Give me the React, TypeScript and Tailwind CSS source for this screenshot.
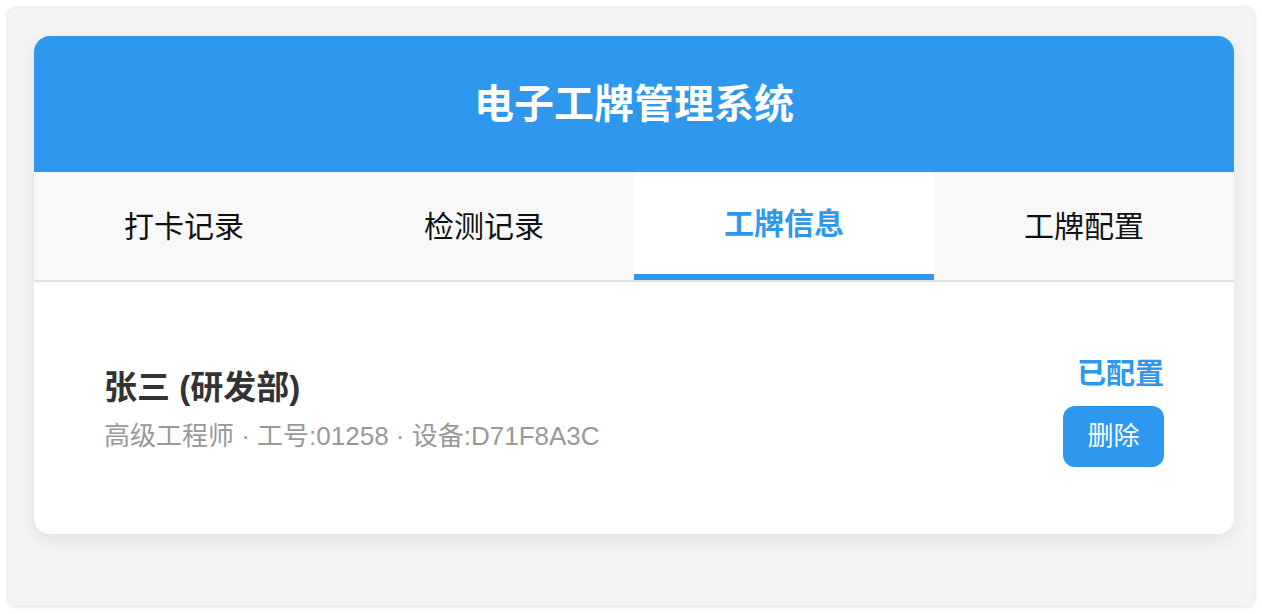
const tabs = ["打卡记录", "检测记录", "工牌信息", "工牌配置"];

export default function App() {
  const active = 2;
  return (
    <div className="min-h-screen bg-white p-2 font-['Liberation_Sans','Noto_Sans_CJK_SC',sans-serif]">
      <div className="h-[598px] w-[1246px] rounded-lg bg-[#f4f4f4] pl-[26px] pt-[28px] shadow-[0_0_4px_rgba(0,0,0,0.18)]">
        <div className="w-[1200px] overflow-hidden rounded-2xl bg-white shadow-[0_6px_18px_rgba(0,0,0,0.08)]">
          <div className="flex h-[136px] items-center justify-center bg-[#2d98ee]">
            <h1 className="text-[40px] font-bold leading-[48px] text-white">电子工牌管理系统</h1>
          </div>

          <div className="flex border-b-2 border-[#e2e2e2] bg-[#f8f8f8]">
            {tabs.map((t, i) => (
              <div
                key={t}
                className={
                  i === active
                    ? "flex h-[108px] flex-1 items-center justify-center border-b-[6px] border-[#2d98ee] bg-white text-[30px] font-bold text-[#2d98ee]"
                    : "flex h-[108px] flex-1 items-center justify-center text-[30px] text-[#111]"
                }
              >
                {t}
              </div>
            ))}
          </div>

          <div className="flex h-[252px] items-center justify-between px-[70px] pt-[6px]">
            <div>
              <div className="text-[33px] font-bold leading-[38px] text-[#333]">张三 (研发部)</div>
              <div className="mt-[11px] text-[26px] leading-[36px] text-[#999]">
                高级工程师 · 工号:01258 · 设备:D71F8A3C
              </div>
            </div>
            <div className="flex flex-col items-end">
              <div className="text-[29px] font-bold leading-[36px] text-[#2d98ee]">已配置</div>
              <button className="mt-[14px] h-[61px] w-[101px] rounded-xl bg-[#2d98ee] text-[26px] text-white">
                删除
              </button>
            </div>
          </div>
        </div>
      </div>
    </div>
  );
}
